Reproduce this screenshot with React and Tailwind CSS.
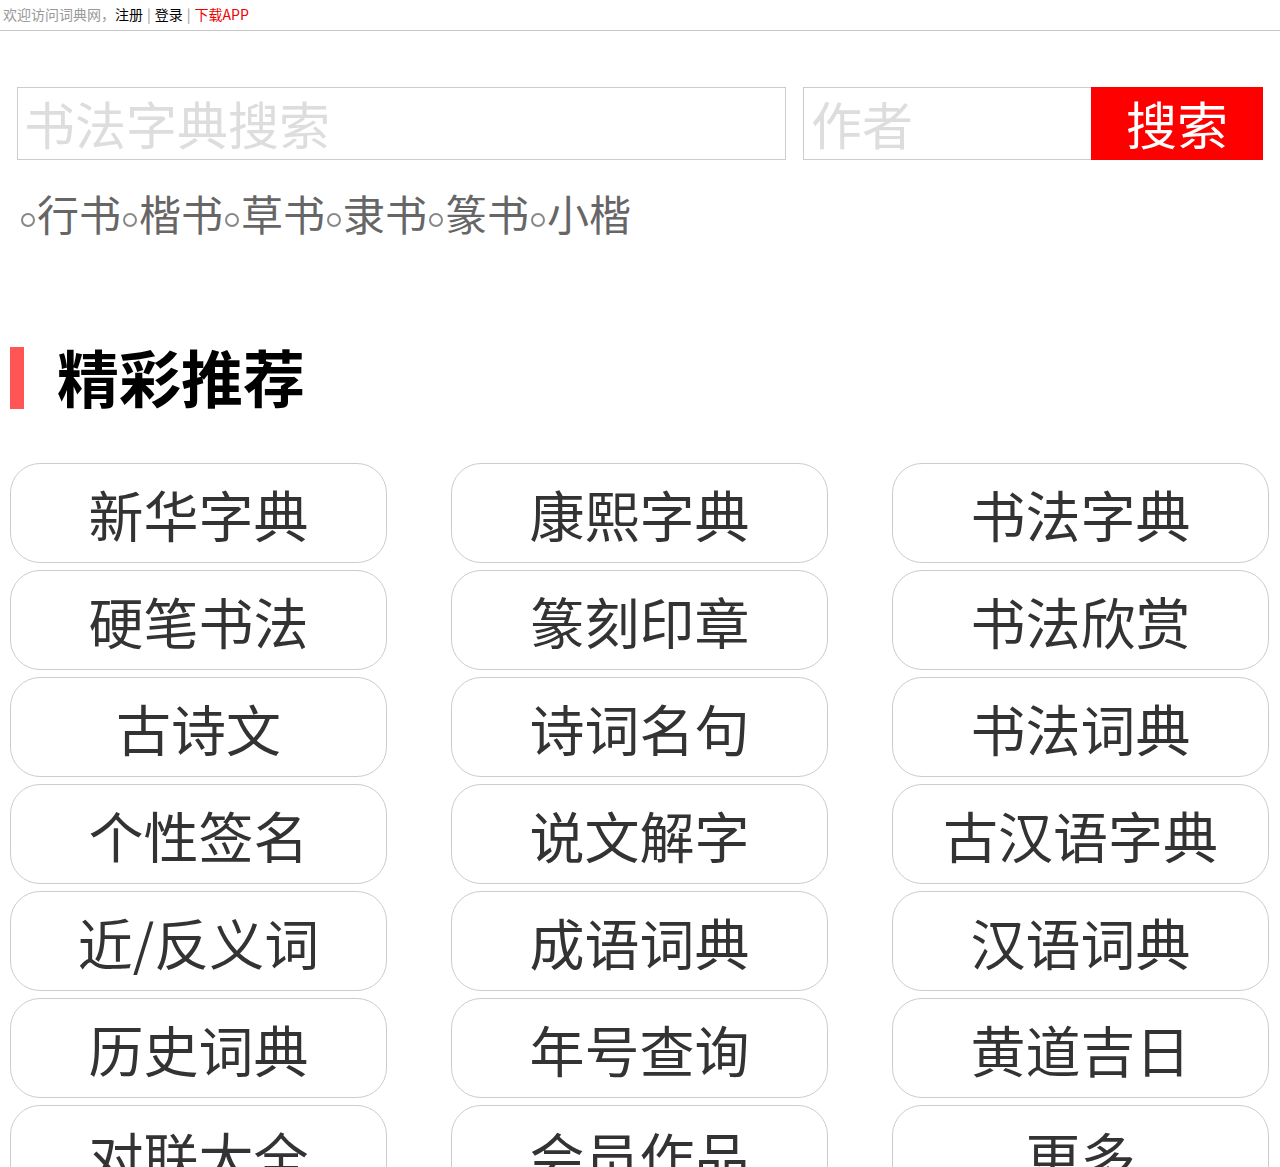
import React from 'react';

const tags = ['行书', '楷书', '草书', '隶书', '篆书', '小楷'];

const links = [
  '新华字典', '康熙字典', '书法字典',
  '硬笔书法', '篆刻印章', '书法欣赏',
  '古诗文', '诗词名句', '书法词典',
  '个性签名', '说文解字', '古汉语字典',
  '近/反义词', '成语词典', '汉语词典',
  '历史词典', '年号查询', '黄道吉日',
  '对联大全', '会员作品', '更多',
];

export default function App() {
  return (
    <div className="w-[1280px] h-[1167px] overflow-hidden bg-white [font-family:'Noto_Sans_CJK_SC','Noto_Sans',sans-serif]">

      {/* top bar */}
      <div className="h-[31px] border-b border-[#c8c8c8] px-[3px] pt-[5px] text-[14px] leading-[18px] text-[#999]">
        欢迎访问词典网，<span className="text-black">注册</span>
        <span className="mx-[4px]">|</span>
        <span className="text-black">登录</span>
        <span className="mx-[4px]">|</span>
        <span className="text-[#e00]">下载APP</span>
      </div>

      {/* search */}
      <div className="flex mt-[56px] pl-[17px]">
        <input
          placeholder="书法字典搜索"
          className="w-[769px] h-[73px] border border-[#ccc] px-[6px] text-[51px] placeholder-[#ddd] outline-none"
        />
        <input
          placeholder="作者"
          className="ml-[17px] w-[288px] h-[73px] border border-[#ccc] border-r-0 px-[7px] text-[51px] placeholder-[#ddd] outline-none"
        />
        <button className="w-[172px] h-[73px] bg-[#f00] text-white text-[51px] leading-none">搜索</button>
      </div>

      {/* tags */}
      <div className="flex items-end mt-[28px] pl-[19px] h-[50px] text-[42px] leading-[50px] text-[#666]">
        {tags.map((t) => (
          <span key={t} className="flex items-end">
            <span className="inline-block w-[14px] h-[14px] rounded-full border-[2px] border-[#888] mb-[11px] mx-[2px]" />
            {t}
          </span>
        ))}
      </div>

      {/* heading */}
      <div className="flex items-center mt-[109px] pl-[10px] h-[62px]">
        <div className="w-[14px] h-[62px] bg-[#f55]" />
        <h2 className="ml-[33px] pb-[4px] text-[62px] font-bold leading-none text-black">精彩推荐</h2>
      </div>

      {/* grid */}
      <div className="grid grid-cols-[377px_377px_377px] gap-x-[64px] gap-y-[7px] mt-[54px] pl-[10px]">
        {links.map((l) => (
          <div
            key={l}
            className="h-[100px] rounded-[30px] border border-[#ccc] flex items-center justify-center pt-[1px] text-[55px] text-[#333] leading-none"
          >
            {l}
          </div>
        ))}
      </div>
    </div>
  );
}
